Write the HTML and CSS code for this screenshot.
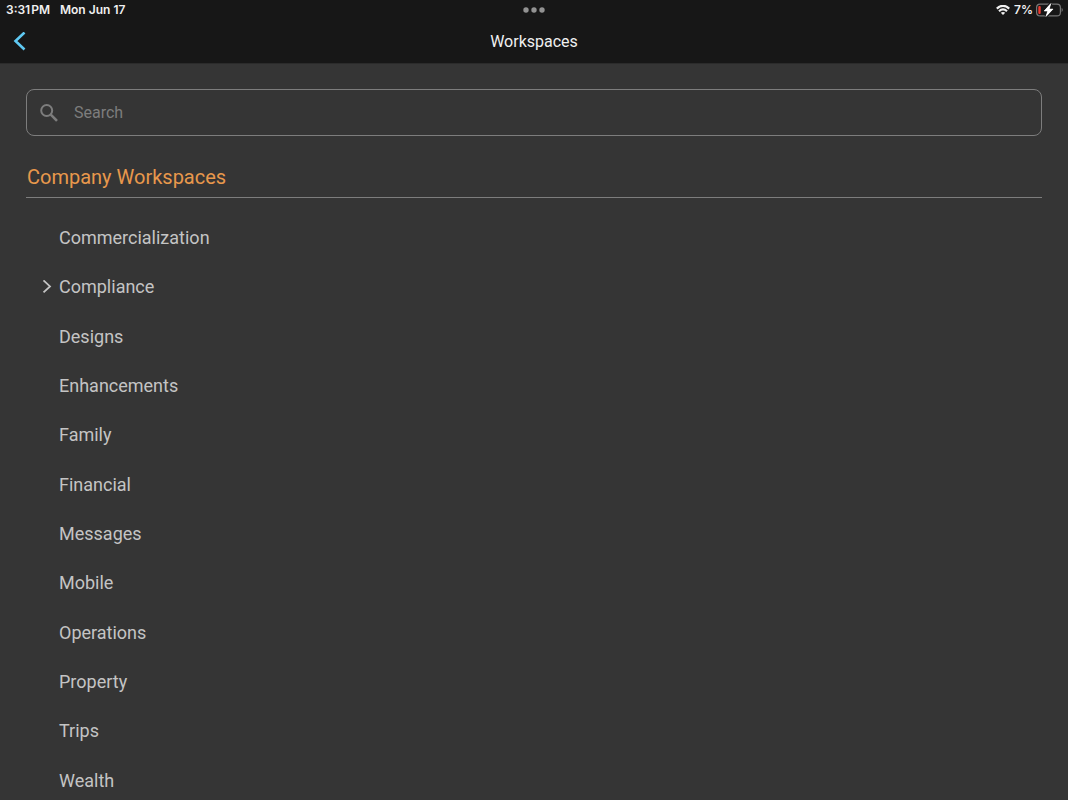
FILE: index.html
```html
<!DOCTYPE html>
<html lang="en">
<head>
<meta charset="utf-8">
<title>Workspaces</title>
<link rel="stylesheet" href="styles.css">
</head>
<body>
<header class="top">
  <div class="status">
    <div class="clock"><span>3:31&#8202;PM</span><span>Mon Jun 17</span></div>
    <svg class="dots" width="22" height="6" viewBox="0 0 22 6" aria-hidden="true"><circle cx="3" cy="3" r="2.700"/><circle cx="11" cy="3" r="2.700"/><circle cx="19" cy="3" r="2.700"/></svg>
    <div class="power">
      <svg width="14" height="10" viewBox="0 0 14 10" fill="none" stroke="#f0f0f0" stroke-width="2.200" aria-hidden="true"><path d="M.8 3.600Q7-2 13.200 3.600M3 6.200Q7 2.600 11 6.200"/><path d="M7 10L4.800 7.800Q7 6 9.200 7.800Z" fill="#f0f0f0" stroke="none"/></svg>
      <span>7%</span>
      <svg width="28" height="14" viewBox="0 0 28 14" aria-hidden="true"><rect x=".6" y="1.100" width="23.800" height="11.800" rx="3.500" fill="none" stroke="#777" stroke-width="1.200"/><path d="M25.600 4.800Q28 7 25.600 9.200Z" fill="#777"/><rect x="2.300" y="3" width="2.400" height="8" rx="1" fill="#f03a30"/><path d="M14.800 .6L8.200 8H11.800L10 13.400L17 6.100H13.200Z" fill="#fff" stroke="#171717" stroke-width="3" paint-order="stroke"/><path d="M14.800 .6L8.200 8H11.800L10 13.400L17 6.100H13.200Z" fill="#fff" stroke="#fff" stroke-width=".6"/></svg>
    </div>
  </div>
  <nav class="bar">
    <button class="back" aria-label="Back"><svg width="14" height="20" viewBox="0 0 14 20" fill="none" stroke="#5fc9f3" stroke-width="2.600" aria-hidden="true"><path d="M11.500 .5L2.500 9L11.500 17.500"/></svg></button>
    <h1 class="title">Workspaces</h1>
  </nav>
</header>
<main class="content">
  <label class="search">
    <svg width="18" height="18" viewBox="0 0 18 18" fill="none" stroke="#7d7d7d" aria-hidden="true"><circle cx="6.700" cy="6.500" r="5.500" stroke-width="2"/><path d="M10.800 10.600L17 16.800" stroke-width="2.600"/></svg>
    <input class="field" type="text" placeholder="Search" aria-label="Search">
  </label>
  <h2 class="heading">Company Workspaces</h2>
  <ul class="list">
    <li class="item">Commercialization</li>
    <li class="item"><button class="expand" aria-label="Expand Compliance"><svg width="10" height="14" viewBox="0 0 10 14" fill="none" stroke="#c4c4c4" stroke-width="1.800" aria-hidden="true"><path d="M1.500 .4L8 6.400L1.500 12.400"/></svg></button>Compliance</li>
    <li class="item">Designs</li>
    <li class="item">Enhancements</li>
    <li class="item">Family</li>
    <li class="item">Financial</li>
    <li class="item">Messages</li>
    <li class="item">Mobile</li>
    <li class="item">Operations</li>
    <li class="item">Property</li>
    <li class="item">Trips</li>
    <li class="item">Wealth</li>
  </ul>
</main>
</body>
</html>
```
FILE: styles.css
```css
* { box-sizing: border-box; }
html { height: 100%; }
body { margin: 0; height: 100%; overflow: hidden; display: flex; flex-direction: column; background: #353535; color: #c4c4c4; font-family: Roboto, sans-serif; }
button { padding: 0; border: 0; background: none; display: flex; }
.top { background: #171717; color: #f0f0f0; border-bottom: 1px solid #2b2b2b; }
.status { display: grid; grid-template-columns: 1fr auto 1fr; align-items: center; height: 20px; padding: 0 4px; font: 600 12px/20px Inter, sans-serif; }
.clock { display: flex; gap: 10px; padding-left: 2px; }
.dots { fill: #929292; }
.power { display: flex; justify-content: flex-end; align-items: center; gap: 4px; }
.power span { margin-right: -1px; }
.bar { display: grid; grid-template-columns: 1fr auto 1fr; align-items: center; height: 43px; padding: 0 13px; }
.back { justify-self: start; }
.title { margin: 0; font-size: 16px; line-height: 20px; font-weight: 400; }
.content { flex: 1; display: flex; flex-direction: column; padding: 25px 26px 0; }
.search { display: flex; align-items: center; gap: 16px; height: 47px; padding: 0 13px; border: 1px solid #7d7d7d; border-radius: 8px; }
.field { flex: 1; min-width: 0; padding: 0; border: 0; outline: 0; background: none; color: #c4c4c4; font: 16px/20px Roboto, sans-serif; }
.field::placeholder { color: #7d7d7d; opacity: 1; }
.heading { margin: 0; padding: 25px 1px 4px; border-bottom: 1px solid #7d7d7d; color: #e8984c; font-size: 20px; line-height: 32px; font-weight: 400; }
.list { flex: 1; margin: 0 0 -5px; padding: 15px 0 0; list-style: none; display: grid; grid-auto-rows: minmax(49px, 1fr); }
.item { position: relative; display: flex; align-items: center; padding-left: 33px; font-size: 18px; }
.expand { position: absolute; left: 16px; }
```
